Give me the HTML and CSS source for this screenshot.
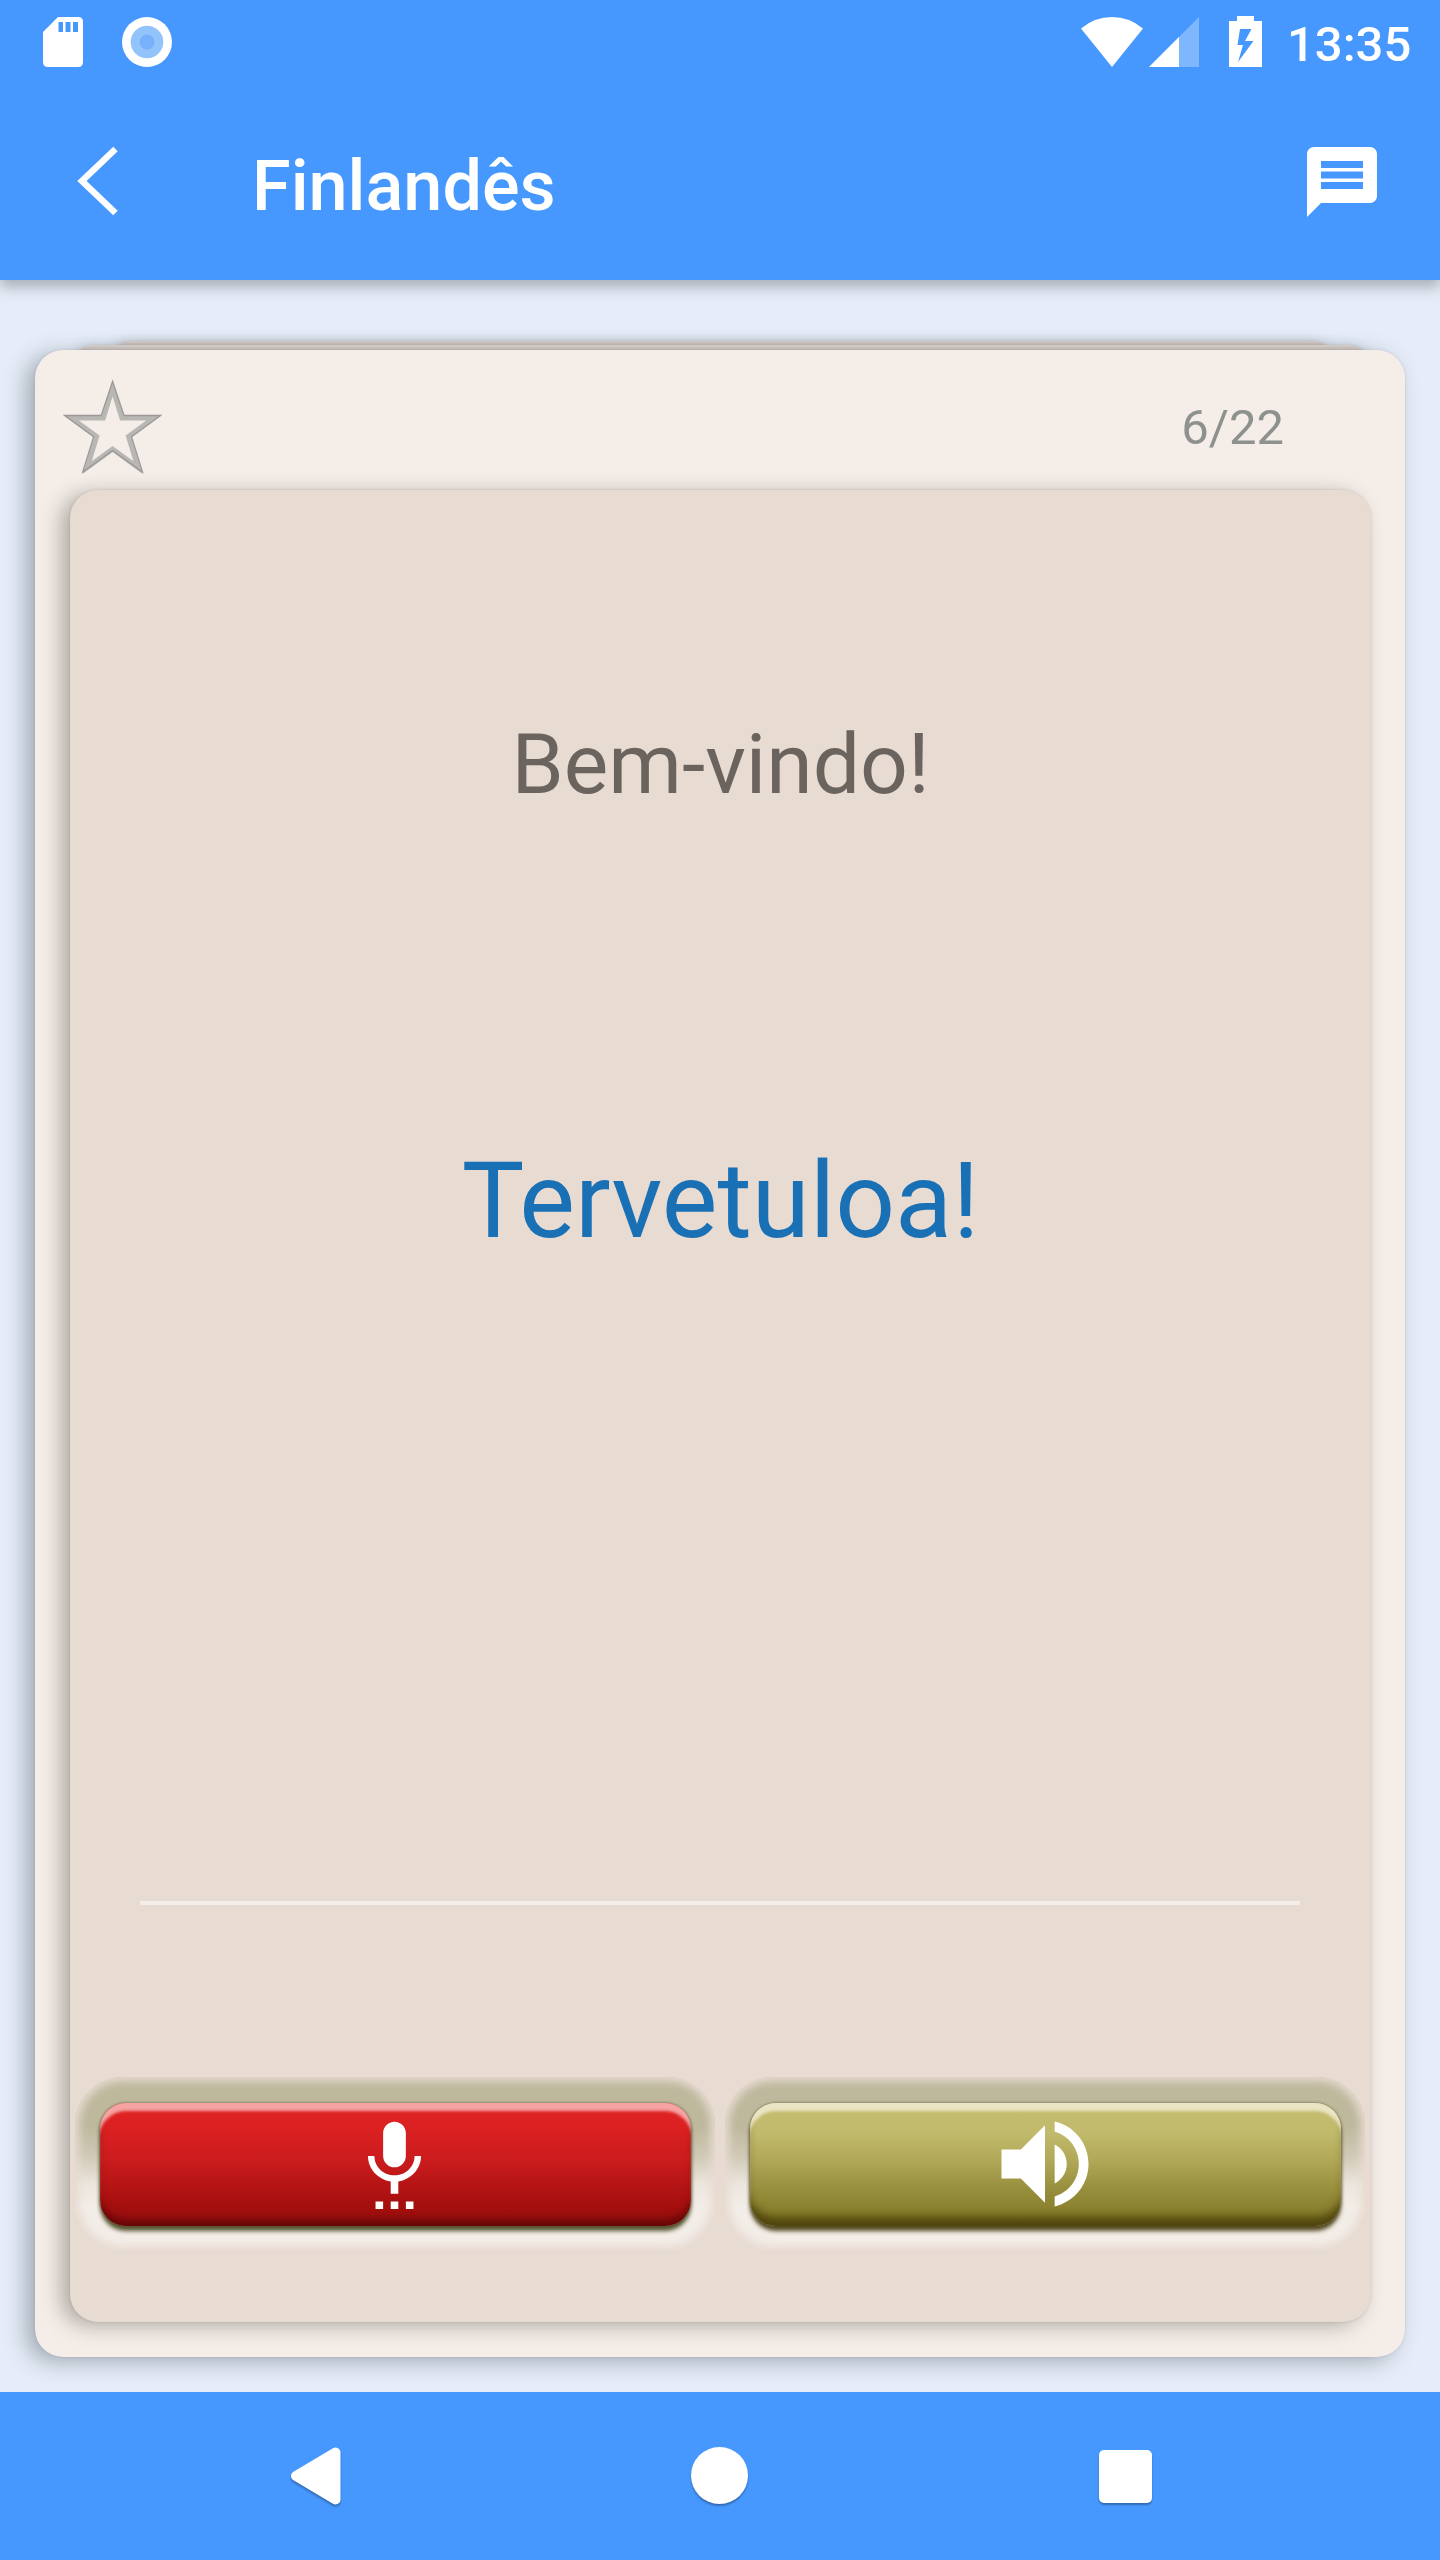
FILE: index.html
```html
<!DOCTYPE html>
<html lang="pt">
<head>
<meta charset="utf-8">
<title>Finlandês</title>
<link rel="stylesheet" href="styles.css">
</head>
<body>
<header class="header">
  <div class="status">
    <svg class="sd" width="40" height="50" viewBox="0 0 40 50"><path fill="#fff" fill-rule="evenodd" d="M15 0H35Q40 0 40 5V45Q40 50 35 50H5Q0 50 0 45V15ZM15.500 5V15H20V5ZM22.500 5V15H27.500V5ZM30 5V15H35V5Z"/></svg>
    <svg class="ring" width="50" height="50" viewBox="0 0 50 50"><circle cx="25" cy="25" r="25" fill="#fff"/><circle cx="25" cy="25" r="16.300" fill="#92c3fb"/><circle cx="25" cy="25" r="7.400" fill="#78b1fb"/></svg>
    <svg class="wifi" width="62" height="50" viewBox="0 0 62 50"><path fill="#fff" d="M31 50L0 11.500Q13.500 0 31 0T62 11.500Z"/></svg>
    <svg class="signal" width="50" height="50" viewBox="0 0 50 50"><path fill="#7fb7ff" d="M50 0V50H0Z"/><path fill="#fff" d="M30 20V50H0Z"/></svg>
    <svg class="battery" width="33" height="51" viewBox="0 0 33 51"><path fill="#fff" fill-rule="evenodd" d="M8 0H25V5H33V51H0V5H8ZM11 13L8.500 29H14L9 46L24.500 25H16L22.500 13Z"/></svg>
    <span class="time">13:35</span>
  </div>
  <div class="toolbar">
    <svg class="back" width="42" height="70" viewBox="0 0 42 70"><path fill="none" stroke="#fff" stroke-width="6.500" d="M38.500 3L5 35L38.500 67"/></svg>
    <h1 class="title">Finlandês</h1>
    <svg class="message" width="84" height="84" viewBox="0 0 24 24"><path fill="#fff" d="M20 2H4c-1.100 0-1.990.900-1.990 2L2 22l4-4h14c1.100 0 2-.900 2-2V4c0-1.100-.900-2-2-2zm-2 12H6v-2h12v2zm0-3H6V9h12v2zm0-3H6V6h12v2z"/></svg>
  </div>
</header>
<main class="main">
  <div class="stack">
    <div class="under under-far"></div>
    <div class="under under-near"></div>
    <article class="card">
      <div class="card-head">
        <svg class="star" width="100" height="96" viewBox="0 0 100 96"><path fill="none" stroke="#b9b7b4" stroke-width="5" d="M49.600 9L58.900 39H91L65.500 57.500L75 88.500L49.600 70L24.200 88.500L33.700 57.500L8.200 39H40.300Z"/><path fill="none" stroke="#9b9998" stroke-width="1.300" d="M49.600 2.500L61 36.500H97.500L68.500 57.700L79.500 93L49.600 71.500L19.700 93L30.700 57.700L1.700 36.500H38.200Z"/></svg>
        <span class="counter">6/22</span>
      </div>
      <section class="panel">
        <p class="source">Bem-vindo!</p>
        <p class="target">Tervetuloa!</p>
        <hr class="rule">
        <div class="buttons">
          <div class="groove"><button class="btn red" aria-label="Gravar"><svg width="91" height="91" viewBox="0 0 24 24"><path fill="#fff" d="M7 24h2v-2H7v2zm5-11c1.660 0 2.990-1.340 2.990-3L15 4c0-1.660-1.340-3-3-3S9 2.340 9 4v6c0 1.660 1.340 3 3 3zm-1 11h2v-2h-2v2zm4 0h2v-2h-2v2zm4-14h-1.700c0 3-2.540 5.100-5.300 5.100S6.700 13 6.700 10H5c0 3.410 2.720 6.230 6 6.720V20h2v-3.280c3.280-.490 6-3.310 6-6.720z"/></svg></button></div>
          <div class="groove"><button class="btn olive" aria-label="Ouvir"><svg width="116" height="116" viewBox="0 0 24 24"><path fill="#fff" d="M3 9v6h4l5 5V4L7 9H3zm13.500 3c0-1.770-1.020-3.290-2.500-4.030v8.050c1.480-.730 2.500-2.250 2.500-4.020zM14 3.230v2.060c2.890.860 5 3.540 5 6.710s-2.110 5.850-5 6.710v2.060c4.010-.910 7-4.490 7-8.770s-2.990-7.860-7-8.770z"/></svg></button></div>
        </div>
      </section>
    </article>
  </div>
</main>
<nav class="nav">
  <svg class="nav-back" width="50" height="58" viewBox="0 0 50 58"><path fill="#fff" stroke="#fff" stroke-width="10" stroke-linejoin="round" d="M5 29L44.500 5.500V52.500Z"/></svg>
  <span class="nav-home"></span>
  <span class="nav-recent"></span>
</nav>
</body>
</html>
```
FILE: styles.css
```css
* { box-sizing: border-box; }
body {
  margin: 0;
  width: 1440px;
  height: 2560px;
  display: flex;
  flex-direction: column;
  overflow: hidden;
  background: #e6edf8;
  font-family: Roboto, sans-serif;
}
svg { display: block; flex: none; }
h1, p { margin: 0; font-weight: 400; }

.header {
  height: 280px;
  flex: none;
  background: #4698fe;
  color: #fff;
  position: relative;
  box-shadow: 0 7px 13px rgba(60, 65, 70, .36);
}
.status {
  display: flex;
  align-items: flex-start;
  height: 84px;
  padding: 17px 29px 0 43px;
}
.ring { margin-left: 39px; }
.wifi { margin-left: auto; }
.signal { margin-left: 6px; }
.battery { margin: -1px 24px 0 30px; }
.time {
  width: 125px;
  padding-left: 1px;
  font-size: 49px;
  line-height: 55px;
  font-weight: 500;
  white-space: nowrap;
}
.toolbar {
  display: flex;
  align-items: center;
  height: 196px;
  padding: 0 56px 0 77px;
}
.back { margin-bottom: 2px; }
.title {
  margin-left: 133px;
  font-size: 70.2px;
  line-height: 84px;
  font-weight: 500;
  padding-top: 7px;
}
.message { margin-left: auto; }

.main {
  flex: 1;
  padding: 61px 35px 35px;
  overflow: hidden;
}
.stack {
  display: flex;
  flex-direction: column;
  height: 100%;
}
.under {
  height: 40px;
  flex: none;
  border-radius: 28px;
  background: linear-gradient(#dfd6d0, #d2c8c2 5px);
  box-shadow: -1px 0 12px rgba(55, 65, 75, .2), 0 0 2px rgba(55, 65, 75, .15);
}
.under-far { margin: 0 72px 0 76px; }
.under-near { margin: -36px 36px 0 38px; }
.card {
  flex: 1;
  margin-top: -35px;
  padding: 0 34px 35px 35px;
  display: flex;
  flex-direction: column;
  border-radius: 28px;
  background: #f4ede8;
  box-shadow: -9px 5px 22px rgba(55, 65, 75, .38), 0 0 3px rgba(55, 65, 75, .15);
}
.card-head {
  height: 140px;
  flex: none;
  display: flex;
  justify-content: space-between;
  align-items: flex-start;
  padding: 29px 87px 0 0;
}
.star { margin-left: -7px; }
.counter {
  font-size: 49px;
  line-height: 58px;
  padding-top: 20px;
  color: #8e928e;
}
.panel {
  flex: 1;
  display: flex;
  flex-direction: column;
  border-radius: 28px;
  background: #e8dbd2;
  box-shadow: -9px 4px 20px rgba(60, 60, 50, .36), 0 0 3px rgba(60, 60, 50, .15);
}
.source {
  margin-top: 225px;
  font-size: 84px;
  line-height: 100px;
  text-align: center;
  color: #6b645e;
}
.target {
  margin-top: 325px;
  font-size: 105px;
  line-height: 124px;
  text-align: center;
  color: #1a70b5;
}
.rule {
  width: 1160px;
  height: 4px;
  margin: 637px auto 0 70px;
  border: 0;
  background: #f3eee9;
}
.buttons {
  display: flex;
  gap: 10px;
  margin: 172px 0 0 5px;
}
.groove {
  width: 640px;
  height: 173px;
  padding: 26px 24px 0 25px;
  border-radius: 48px;
  background: linear-gradient(#beb89d 0%, #beb89d 28%, #cfc8b4 45%, #ece6dd 62%, #f3ede8 75%, #f3ede8 100%);
  box-shadow: inset 0 0 8px 4px #e8dbd2;
}
.btn {
  display: flex;
  align-items: center;
  justify-content: center;
  width: 100%;
  height: 123px;
  padding: 0 2px 3px 0;
  border: 0;
  border-radius: 26px;
}
.red {
  background: linear-gradient(#e02122 0%, #dc2122 18%, #cc1c1e 45%, #a8100f 80%, #960e0c 100%);
  box-shadow: inset 0 9px 3px -1px rgba(255, 214, 214, .72), inset 0 -9px 8px -3px rgba(60, 0, 0, .6), 0 5px 4px 0 #565530, 0 0 3px #66603e;
}
.olive {
  padding-bottom: 1px;
  background: linear-gradient(#c5be70 0%, #c1b96b 25%, #b2aa59 45%, #978f3d 70%, #807420 100%);
  box-shadow: inset 0 9px 3px -1px rgba(246, 241, 222, .76), inset 0 -12px 8px -3px rgba(50, 40, 0, .62), 0 5px 4px 0 #554c24, 0 0 3px #66603e;
}

.nav {
  height: 168px;
  flex: none;
  display: flex;
  align-items: center;
  background: #4698fe;
  position: relative;
}
.nav-back { margin-left: 291px; filter: drop-shadow(0 2px 1px rgba(0, 0, 0, .3)); }
.nav-home {
  width: 57px;
  height: 57px;
  margin: 0 0 1px 350px;
  border-radius: 50%;
  background: #fff;
  box-shadow: 0 2px 2px rgba(0, 0, 0, .3);
}
.nav-recent {
  width: 53px;
  height: 53px;
  margin-left: 351px;
  border-radius: 5px;
  background: #fff;
  box-shadow: 0 2px 2px rgba(0, 0, 0, .3);
}
```
